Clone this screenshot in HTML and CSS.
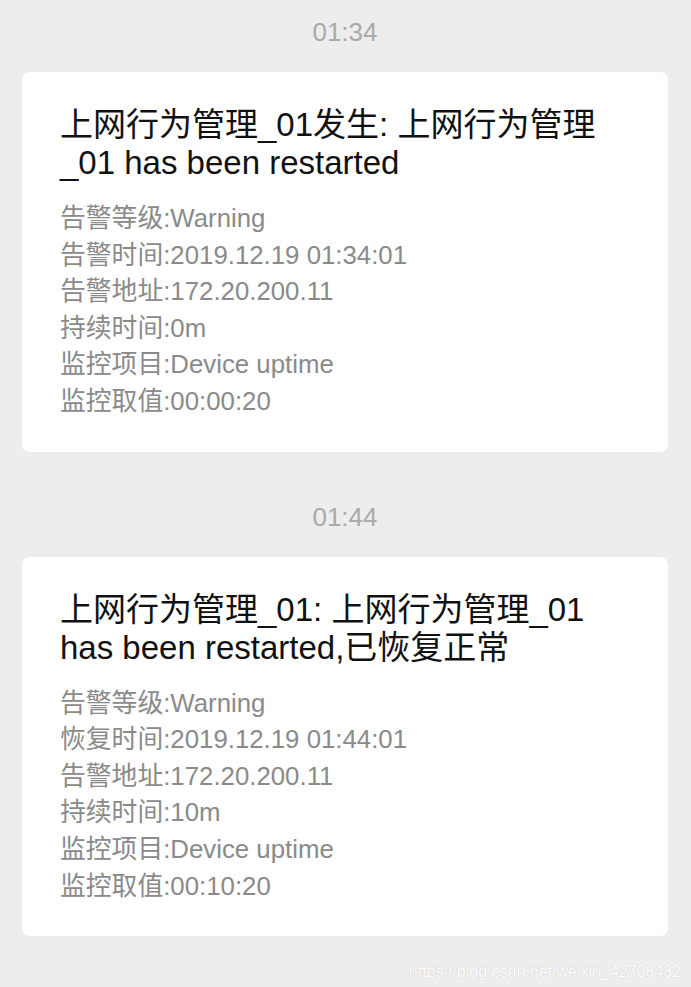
FILE: index.html
```html
<!DOCTYPE html>
<html lang="zh-CN">

<head>
    <meta charset="UTF-8">
    <meta name="viewport" content="width=device-width, initial-scale=1.0">
    <title>告警消息</title>
    <link rel="stylesheet" href="styles.css">
</head>

<body>
    <div class="chat">
        <div class="time">01:34</div>
        <div class="card">
            <div class="card-title">上网行为管理_01发生: 上网行为管理<br>_01 has been restarted</div>
            <div class="card-info">
                <p>告警等级:Warning</p>
                <p>告警时间:2019.12.19 01:34:01</p>
                <p>告警地址:172.20.200.11</p>
                <p>持续时间:0m</p>
                <p>监控项目:Device uptime</p>
                <p>监控取值:00:00:20</p>
            </div>
        </div>

        <div class="time">01:44</div>
        <div class="card">
            <div class="card-title">上网行为管理_01: 上网行为管理_01<br>has been restarted,已恢复正常</div>
            <div class="card-info">
                <p>告警等级:Warning</p>
                <p>恢复时间:2019.12.19 01:44:01</p>
                <p>告警地址:172.20.200.11</p>
                <p>持续时间:10m</p>
                <p>监控项目:Device uptime</p>
                <p>监控取值:00:10:20</p>
            </div>
        </div>
    </div>

    <div class="watermark">https://blog.csdn.net/weixin_42708432</div>
</body>

</html>
```

FILE: styles.css
```css
body {
    font-family: "Liberation Sans", "Noto Sans CJK SC", sans-serif;
    background-color: #ededed;
    margin: 0;
    padding: 0;
    height: 987px;
    position: relative;
    overflow: hidden;
}

.chat {
    padding: 0 23px 0 22px;
}

.time {
    height: 40px;
    line-height: 40px;
    margin: 45px 0 20px;
    text-align: center;
    font-size: 26px;
    color: #a9a9a9;
}

.time:first-child {
    margin-top: 12px;
}

.card {
    background-color: white;
    border-radius: 8px;
    padding: 34px 20px 32px 38px;
}

.card-title {
    font-size: 33px;
    line-height: 38px;
    color: #111;
}

.card-info {
    margin-top: 18px;
}

.card-info p {
    margin: 0;
    font-size: 25.8px;
    line-height: 36.6px;
    color: #8a8a8a;
}

.watermark {
    position: absolute;
    right: 10px;
    bottom: 6px;
    font-size: 16px;
    color: #fff;
    text-shadow: 0 0 1px #bbb;
}
```
